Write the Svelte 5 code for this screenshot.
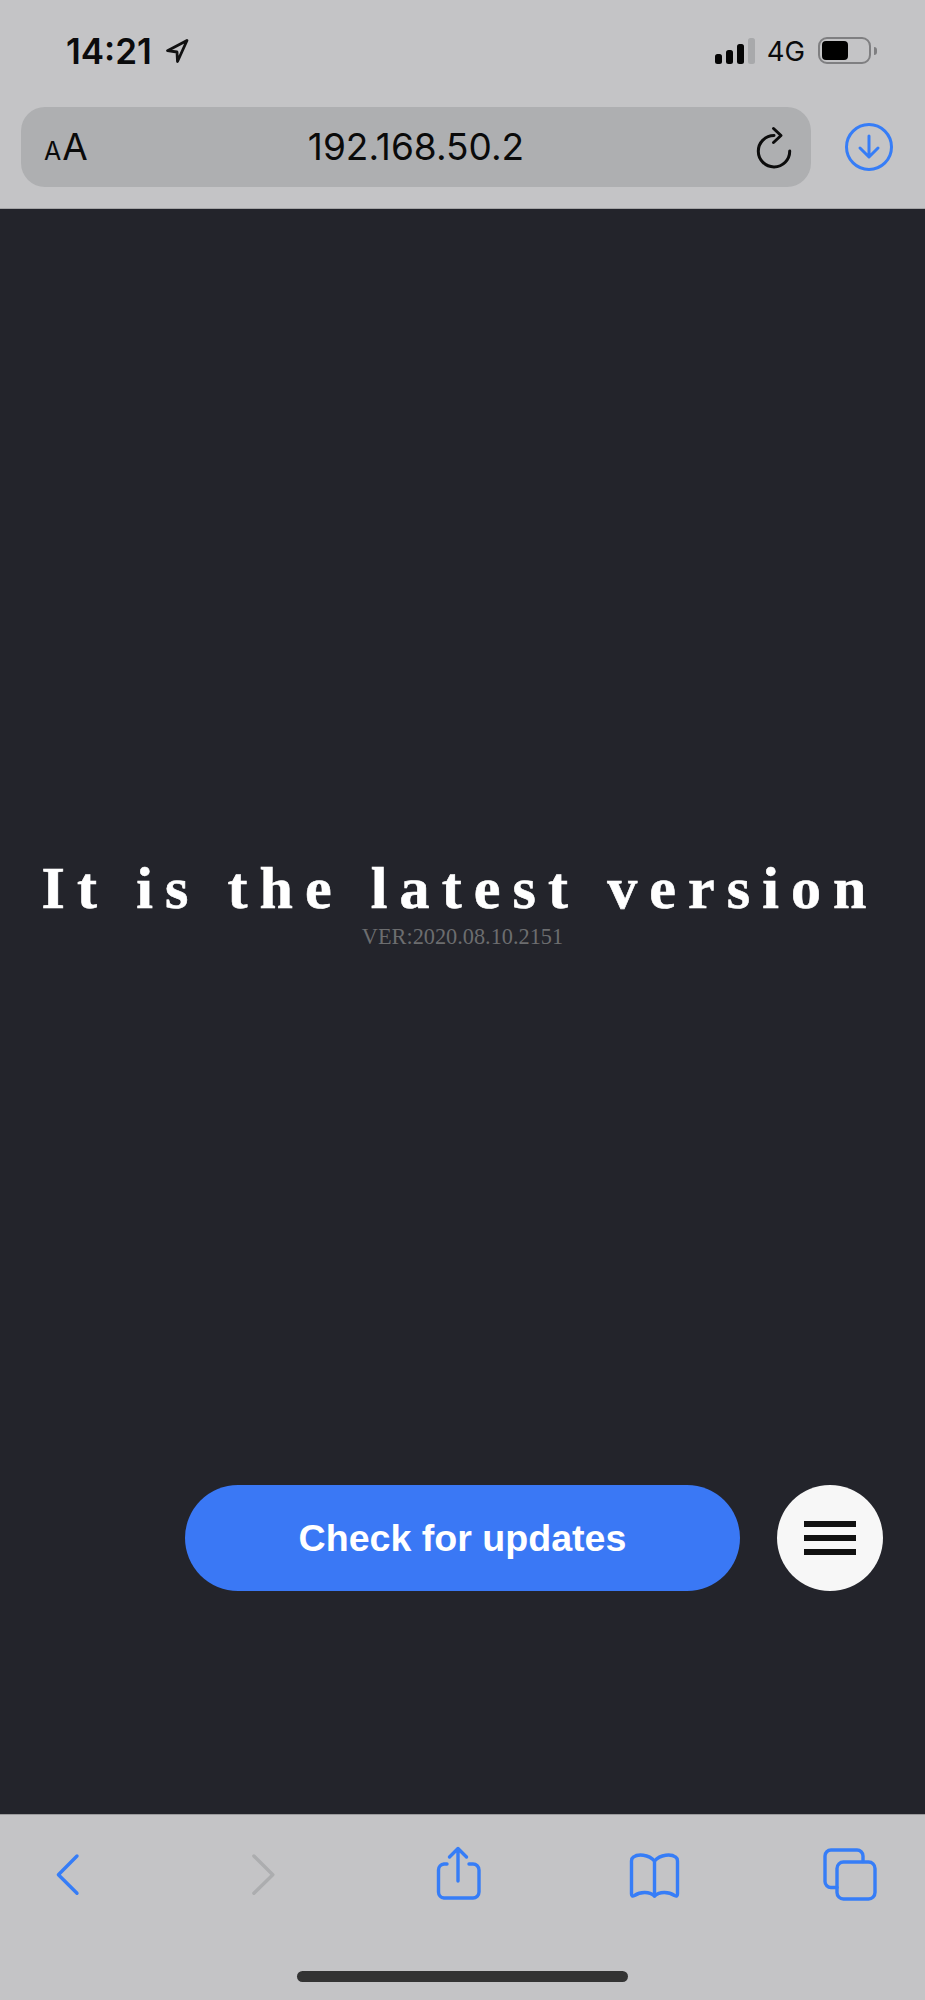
<script>
  const title = 'It is the latest version';
  const version = 'VER:2020.08.10.2151';
</script>

<div class="page">
  <header class="chrome">
    <div class="status">
      <div class="clock">
        <span class="time">14:21</span>
        <svg class="loc" viewBox="165 37 24 26" aria-hidden="true">
          <path d="M187 39.500 L167.500 49.700 L177 51 L177.500 60.500 Z" />
        </svg>
      </div>
      <div class="indicators">
        <div class="signal">
          <i class="b1"></i><i class="b2"></i><i class="b3"></i><i class="b4"></i>
        </div>
        <span class="net">4G</span>
        <div class="battery"><div class="level"></div></div>
        <div class="nub"></div>
      </div>
    </div>
    <div class="urlrow">
      <div class="urlbar">
        <span class="aa"><small>A</small>A</span>
        <span class="host">192.168.50.2</span>
        <svg class="reload" viewBox="755 125 38 45" aria-hidden="true">
          <path d="M774 135.500 A15.700 15.700 0 1 0 789.700 151" />
          <path d="M773.500 128.500 L781 135.500 L773.500 142.500" />
        </svg>
      </div>
      <svg class="download" viewBox="0 0 48 48" aria-hidden="true">
        <circle cx="24" cy="24" r="22.500" />
        <path d="M24 13 V33 M15 25 L24 34 L33 25" />
      </svg>
    </div>
  </header>

  <main class="content">
    <h1>{title}</h1>
    <p class="ver">{version}</p>
    <div class="actions">
      <button class="check">Check for updates</button>
      <button class="menu" aria-label="Menu"><span></span><span></span><span></span></button>
    </div>
  </main>

  <footer class="toolbar">
    <div class="icons">
      <svg viewBox="38 1846 60 56" aria-hidden="true">
        <path d="M77 1856 L58.400 1874.700 L77 1893.300" />
      </svg>
      <svg class="off" viewBox="233.500 1846 60 56" aria-hidden="true">
        <path d="M253.400 1856 L272.300 1874.700 L253.400 1893.300" />
      </svg>
      <svg viewBox="429 1846 60 56" aria-hidden="true">
        <path d="M447 1864 H444 A6 6 0 0 0 438.500 1870 V1892 A6 6 0 0 0 444 1898 H473 A6 6 0 0 0 479 1892 V1870 A6 6 0 0 0 473 1864 H469" />
        <path d="M458 1881 V1848.500 M449.500 1857 L458 1848.500 L466.500 1857" />
      </svg>
      <svg viewBox="624.500 1846 60 56" aria-hidden="true">
        <path d="M654 1861 C648 1854 637 1854 633 1857 C631.500 1858 631 1859.500 631 1861 V1894 C631 1896 632 1896.500 634 1895.500 C640 1891.500 649 1891.500 654 1896 C659 1891.500 668 1891.500 674 1895.500 C676 1896.500 677 1896 677 1894 V1861 C677 1859.500 676.500 1858 675 1857 C671 1854 660 1854 654 1861 Z" />
        <path d="M654 1861 V1896" />
      </svg>
      <svg viewBox="820 1846 60 56" aria-hidden="true">
        <path d="M837 1887.500 H831 A6 6 0 0 1 825 1881.500 V1856 A6 6 0 0 1 831 1850 H857 A6 6 0 0 1 863 1856 V1861.500" />
        <rect x="837" y="1862" width="38" height="37" rx="6.500" />
      </svg>
    </div>
    <div class="home"></div>
  </footer>
</div>

<style>
  :global(body) {
    margin: 0;
    background: #23242b;
  }

  .page {
    display: flex;
    flex-direction: column;
    width: 925px;
    height: 2000px;
    overflow: hidden;
    font-family: Inter, "Liberation Sans", sans-serif;
  }

  .chrome {
    box-sizing: border-box;
    height: 209px;
    background: #c4c4c6;
    border-bottom: 1px solid #a4a4a6;
  }

  .status {
    box-sizing: border-box;
    display: flex;
    justify-content: space-between;
    align-items: center;
    height: 107px;
    padding: 0 48px 6px 66px;
    color: #0b0b0c;
  }

  .clock,
  .indicators {
    display: flex;
    align-items: center;
  }

  .time {
    font-size: 35px;
    font-weight: 600;
    line-height: 40px;
  }

  .loc {
    width: 24px;
    height: 26px;
    margin-left: 13px;
    fill: none;
    stroke: #111;
    stroke-width: 2.800;
    stroke-linejoin: round;
  }

  .signal {
    display: flex;
    align-items: flex-end;
    gap: 4px;
    height: 26px;
  }

  .signal i {
    display: block;
    width: 7px;
    border-radius: 2.500px;
    background: #050505;
  }

  .b1 { height: 10px; }
  .b2 { height: 14px; }
  .b3 { height: 20px; }
  .signal .b4 { height: 26px; background: #a8a9ab; }

  .net {
    margin-left: 12px;
    font-size: 27.500px;
    line-height: 32px;
  }

  .battery {
    box-sizing: border-box;
    width: 53px;
    height: 27px;
    margin-left: 13px;
    padding: 2px;
    border: 2px solid #7f7f81;
    border-radius: 9px;
  }

  .level {
    width: 26px;
    height: 19px;
    border-radius: 4px;
    background: #000;
  }

  .nub {
    width: 3px;
    height: 8px;
    margin-left: 3px;
    border-radius: 0 4px 4px 0;
    background: #7f7f81;
  }

  .urlrow {
    display: flex;
    align-items: center;
    padding-left: 21px;
  }

  .urlbar {
    box-sizing: border-box;
    position: relative;
    display: flex;
    align-items: center;
    justify-content: center;
    width: 790px;
    height: 80px;
    border-radius: 24px;
    background: #aeafb1;
    color: #0a0a0a;
  }

  .aa {
    position: absolute;
    left: 23px;
    top: 18px;
    font-size: 37px;
    line-height: 44px;
  }

  .aa small {
    font-size: 25px;
    margin-right: 1px;
  }

  .host {
    font-size: 37px;
    line-height: 44px;
  }

  .reload {
    position: absolute;
    left: 734px;
    top: 18px;
    width: 38px;
    height: 45px;
    fill: none;
    stroke: #0c0c0c;
    stroke-width: 3;
    stroke-linecap: round;
    stroke-linejoin: round;
  }

  .download {
    width: 48px;
    height: 48px;
    margin-left: 34px;
    fill: none;
    stroke: #367df7;
    stroke-width: 3;
    stroke-linecap: round;
    stroke-linejoin: round;
  }

  .content {
    flex: 1;
    display: flex;
    flex-direction: column;
    align-items: center;
    background: #23242b;
  }

  h1 {
    margin: 644px 5px 0 0;
    font-family: "Liberation Serif", serif;
    font-size: 60px;
    font-weight: 700;
    line-height: 70px;
    letter-spacing: 12.100px;
    color: #fff;
    white-space: nowrap;
    -webkit-text-stroke: 0.6px #fff;
  }

  .ver {
    margin: 0;
    padding-top: 1px;
    font-family: "Liberation Serif", serif;
    font-size: 22.300px;
    line-height: 26px;
    color: #6c6d6f;
  }

  .actions {
    align-self: flex-start;
    display: flex;
    gap: 37px;
    margin: 535px 0 0 185px;
  }

  button {
    border: 0;
    padding: 0;
    cursor: pointer;
  }

  .check {
    width: 555px;
    height: 106px;
    border-radius: 53px;
    background: #3a78f5;
    color: #fff;
    font-family: "Liberation Sans", Arial, sans-serif;
    font-size: 37.600px;
    font-weight: 700;
  }

  .menu {
    display: flex;
    flex-direction: column;
    align-items: center;
    justify-content: center;
    gap: 8px;
    width: 106px;
    height: 106px;
    border-radius: 50%;
    background: #f7f7f7;
  }

  .menu span {
    display: block;
    width: 52px;
    height: 6px;
    background: #111;
  }

  .toolbar {
    box-sizing: border-box;
    height: 186px;
    background: #c4c4c6;
    border-top: 1px solid #9a9a9c;
    padding-top: 31px;
  }

  .icons {
    display: flex;
    justify-content: space-between;
    padding: 0 45px 0 38px;
  }

  .icons svg {
    width: 60px;
    height: 56px;
    fill: none;
    stroke: #367df7;
    stroke-width: 3.400;
    stroke-linecap: round;
    stroke-linejoin: round;
  }

  .icons svg.off {
    stroke: #acadaf;
  }

  .home {
    width: 331px;
    height: 11px;
    margin: 69px 0 0 297px;
    border-radius: 6px;
    background: #333;
  }
</style>
